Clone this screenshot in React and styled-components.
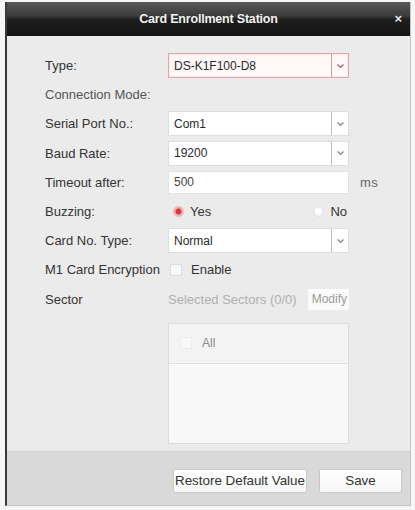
import React from "react";
import styled, { createGlobalStyle } from "styled-components";

const Global = createGlobalStyle`
  html, body { margin: 0; padding: 0; background: #f6f6f6; }
  body { font-family: "Liberation Sans", Arial, sans-serif; }
  * { box-sizing: border-box; }
`;

const Page = styled.div`
  width: 415px;
  height: 510px;
  padding: 2px 4px 4px 5px;
`;

const Dialog = styled.div`
  height: 100%;
  display: flex;
  flex-direction: column;
  border-left: 2px solid #3a3a3a;
  border-right: 1px solid #c4c4c4;
  border-bottom: 1px solid #c4c4c4;
  background: #ebebeb;
`;

const TitleBar = styled.div`
  height: 34px;
  flex: none;
  display: flex;
  align-items: center;
  justify-content: center;
  position: relative;
  background: linear-gradient(#585858 0%, #3c3c3c 40%, #1e1e1e 52%, #141414 100%);
  color: #f2f2f2;
  font-size: 12.5px;
  font-weight: bold;
  letter-spacing: -0.2px;
`;

const Close = styled.span`
  position: absolute;
  right: 8px;
  top: 9px;
  font-size: 13px;
  font-weight: bold;
  color: #e6e6e6;
`;

const Body = styled.div`
  flex: 1;
  padding: 15px 0 0 38px;
  display: flex;
  flex-direction: column;
`;

const Form = styled.div`
  display: grid;
  grid-template-columns: 123px 181px auto;
  grid-auto-rows: 29.2px;
  align-items: center;
  font-size: 13px;
  color: #3a3a3a;
`;

const Label = styled.div`
  grid-column: 1;
  white-space: nowrap;
  color: ${(p) => (p.$muted ? "#555" : "#333")};
  ${(p) => p.$span && "grid-column: 1 / span 2;"}
`;

const Select = styled.div`
  grid-column: 2;
  height: 25px;
  display: flex;
  align-items: stretch;
  background: ${(p) => (p.$alert ? "linear-gradient(#fff6f6, #fffafa)" : "#fff")};
  border: 1px solid ${(p) => (p.$alert ? "#e3a6a6" : "#dedede")};
  box-shadow: ${(p) => (p.$alert ? "inset 0 0 2px #f0c8c8" : "none")};
`;

const SelectValue = styled.div`
  flex: 1;
  display: flex;
  align-items: center;
  padding-left: 5px;
  font-size: 12px;
  color: #2a2a2a;
`;

const Arrow = styled.div`
  width: 17px;
  border-left: 1px solid ${(p) => (p.$alert ? "#cf9f9f" : "#bdbdbd")};
  display: flex;
  align-items: center;
  justify-content: center;
`;

const TextInput = styled.div`
  grid-column: 2;
  height: 23px;
  display: flex;
  align-items: center;
  padding-left: 5px;
  background: #fff;
  border: 1px solid #e4e4e4;
  font-size: 12px;
  color: #444;
`;

const Unit = styled.div`
  grid-column: 3;
  padding-left: 11px;
  color: #666;
  letter-spacing: 0.5px;
`;

const RadioGroup = styled.div`
  grid-column: 2;
  display: flex;
  justify-content: space-between;
  padding: 0 2px 0 5px;
`;

const RadioOption = styled.label`
  display: flex;
  align-items: center;
  gap: 6px;
  font-size: 13px;
  color: #333;
`;

const RadioDot = styled.span`
  width: 11px;
  height: 11px;
  border-radius: 50%;
  background: ${(p) => (p.$on ? "radial-gradient(circle, #d9383d 0 2.5px, #f0aeb0 3.5px, #f7d4d5 100%)" : "radial-gradient(circle, #ffffff 40%, #e8e8e8 100%)")};
  border: 1px solid ${(p) => (p.$on ? "#eab1b2" : "#e0e0e0")};
`;

const CheckOption = styled.label`
  grid-column: 2;
  display: flex;
  align-items: center;
  gap: 9px;
  padding-left: 2px;
  font-size: 13px;
  color: #333;
`;

const CheckBox = styled.span`
  width: 12px;
  height: 12px;
  background: #f8f8f8;
  border: 1px solid ${(p) => (p.$faint ? "#ececec" : "#dcdcdc")};
`;

const SectorCell = styled.div`
  grid-column: 2;
  display: flex;
  align-items: center;
  justify-content: space-between;
`;

const SectorInfo = styled.span`
  color: #b0b0b0;
  font-size: 13px;
  white-space: nowrap;
`;

const SmallButton = styled.span`
  height: 21px;
  padding: 0 2px 0 4px;
  display: flex;
  align-items: center;
  background: #fafafa;
  color: #9a9a9a;
  font-size: 12px;
`;

const SectorList = styled.div`
  margin: 9px 0 0 123px;
  width: 181px;
  height: 121px;
  background: #f8f8f8;
  border: 1px solid #dcdcdc;
`;

const ListHeader = styled.div`
  height: 40px;
  display: flex;
  align-items: center;
  gap: 10px;
  padding-left: 11px;
  background: #f3f3f3;
  border-bottom: 1px solid #dedede;
  font-size: 12px;
  color: #8a8a8a;
`;

const Footer = styled.div`
  height: 54px;
  flex: none;
  display: flex;
  align-items: center;
  justify-content: flex-end;
  gap: 12px;
  padding: 4px 8px 0 0;
  background: #d9d9d9;
  border-top: 1px solid #d0d0d0;
`;

const Button = styled.button`
  height: 24px;
  width: ${(p) => p.$w}px;
  background: linear-gradient(#ffffff, #f6f6f6);
  border: 1px solid #c8c8c8;
  border-radius: 2px;
  font-family: "Liberation Sans", Arial, sans-serif;
  font-size: 13.4px;
  color: #333;
  padding: 0;
`;

const Chevron = ({ color = "#888" }) => (
  <svg width="9" height="6" viewBox="0 0 9 6">
    <path d="M1.5 1.5 L4.5 4.2 L7.5 1.5" fill="none" stroke={color} strokeWidth="1.4" />
  </svg>
);

const Dropdown = ({ value, alert }) => (
  <Select $alert={alert}>
    <SelectValue>{value}</SelectValue>
    <Arrow $alert={alert}>
      <Chevron color={alert ? "#a07070" : "#8a8a8a"} />
    </Arrow>
  </Select>
);

export default function App() {
  return (
    <>
      <Global />
      <Page>
        <Dialog>
          <TitleBar>
            Card Enrollment Station
            <Close>×</Close>
          </TitleBar>
          <Body>
            <Form>
              <Label>Type:</Label>
              <Dropdown value="DS-K1F100-D8" alert />

              <Label $span $muted>Connection Mode:</Label>

              <Label>Serial Port No.:</Label>
              <Dropdown value="Com1" />

              <Label>Baud Rate:</Label>
              <Dropdown value="19200" />

              <Label>Timeout after:</Label>
              <TextInput>500</TextInput>
              <Unit>ms</Unit>

              <Label>Buzzing:</Label>
              <RadioGroup>
                <RadioOption>
                  <RadioDot $on />
                  Yes
                </RadioOption>
                <RadioOption>
                  <RadioDot />
                  No
                </RadioOption>
              </RadioGroup>

              <Label>Card No. Type:</Label>
              <Dropdown value="Normal" />

              <Label>M1 Card Encryption</Label>
              <CheckOption>
                <CheckBox />
                Enable
              </CheckOption>

              <Label>Sector</Label>
              <SectorCell>
                <SectorInfo>Selected Sectors (0/0)</SectorInfo>
                <SmallButton>Modify</SmallButton>
              </SectorCell>
            </Form>
            <SectorList>
              <ListHeader>
                <CheckBox $faint />
                All
              </ListHeader>
            </SectorList>
          </Body>
          <Footer>
            <Button $w={134}>Restore Default Value</Button>
            <Button $w={83}>Save</Button>
          </Footer>
        </Dialog>
      </Page>
    </>
  );
}
